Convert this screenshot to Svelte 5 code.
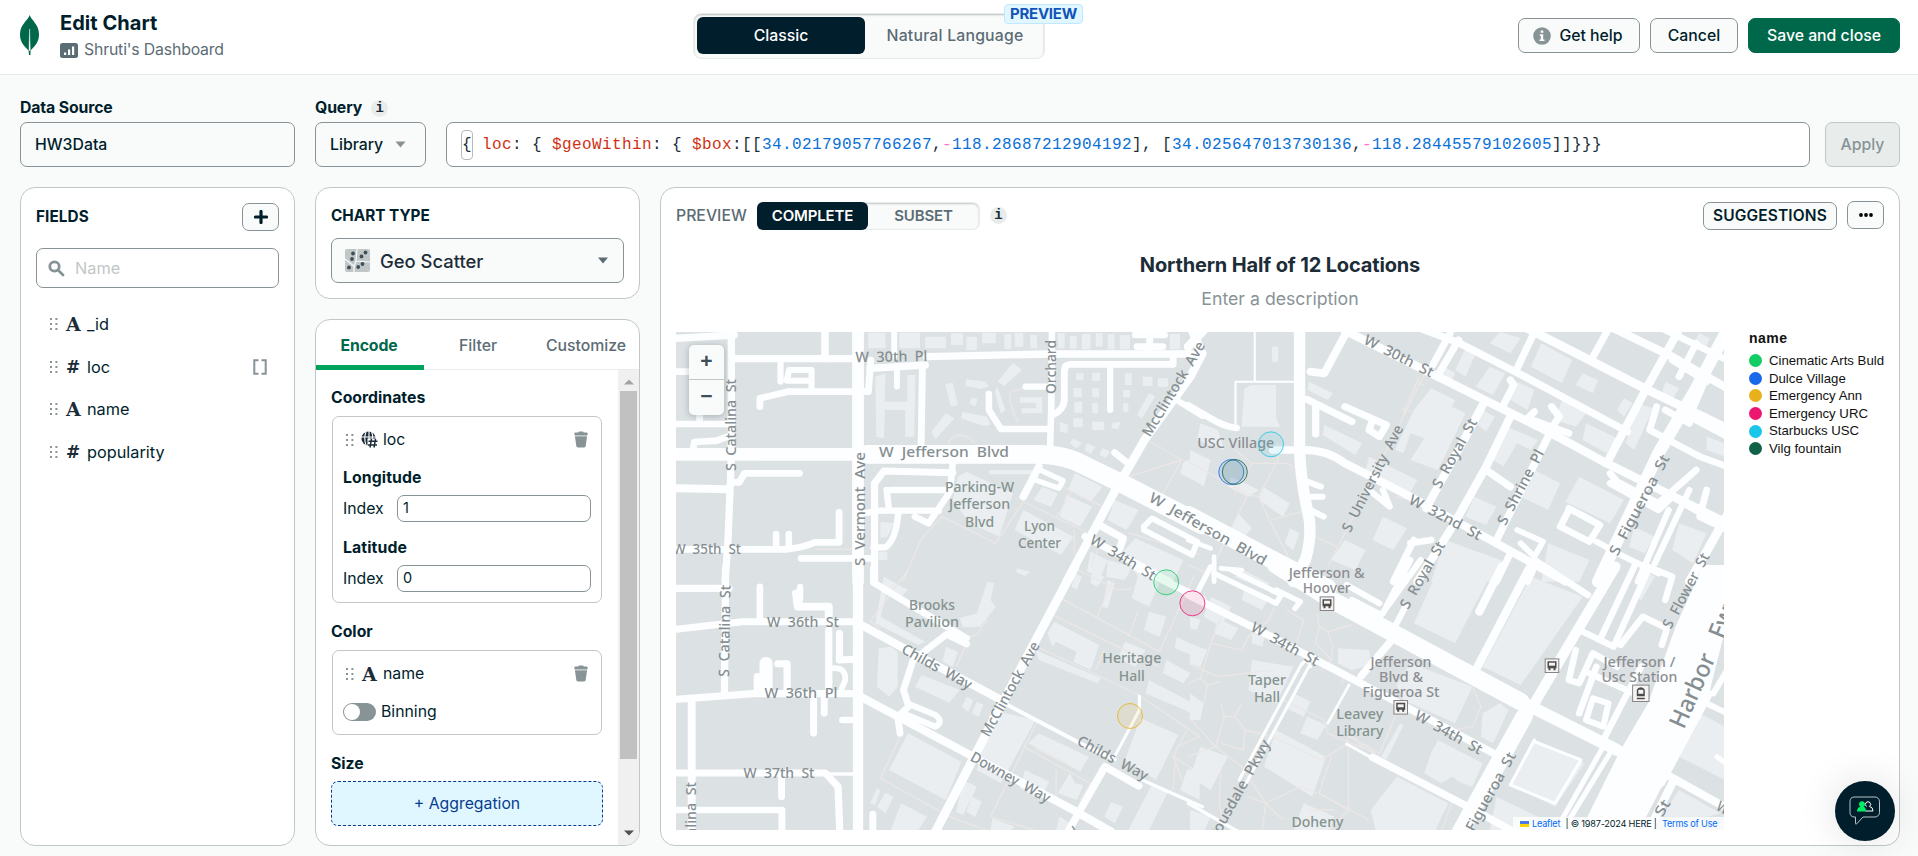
<script>
  const fields = [
    { name: '_id', type: 'A' },
    { name: 'loc', type: '#', array: true },
    { name: 'name', type: 'A' },
    { name: 'popularity', type: '#' }
  ];

  const legend = [
    ['Cinematic Arts Buld', '#13cc63'],
    ['Dulce Village', '#1868ea'],
    ['Emergency Ann', '#e8b01a'],
    ['Emergency URC', '#ec1670'],
    ['Starbucks USC', '#19c5e8'],
    ['Vilg fountain', '#116149']
  ];

  const markers = [
    [490.2, 250.3, '#13cc63'],
    [516.4, 271.3, '#ec1670'],
    [454, 384, '#e8b01a'],
    [555.3, 140, '#1868ea'],
    [558.8, 140, '#116149'],
    [595, 112.3, '#19c5e8']
  ];

  // text, centre x, centre y, rotation, length
  const streets = [
    ['W  30th  Pl', 215.4, 24.7, -1, 72],
    ['S  Catalina  St', 55, 93, -90, 92],
    ['S  Vermont  Ave', 183.7, 177, -90, 114],
    ['W  Jefferson  Blvd', 268, 119.7, 0, 130],
    ['Orchard', 374.8, 35, -90, 54],
    ['McClintock  Ave', 497.5, 57, -59, 108],
    ['W  Jefferson  Blvd', 532, 197, 29.5, 132],
    ['W  35th  St', 31, 217, 0, 68],
    ['W  34th  St', 447, 225.5, 31, 74],
    ['S  Catalina  St', 48.7, 298.8, -89, 92],
    ['W  36th  St', 127, 290.3, 0, 72],
    ['W  36th  Pl', 125, 361.3, 0, 73],
    ['W  37th  St', 103, 440.7, 0, 71],
    ['S  Catalina  St', 15, 496, -90, 92],
    ['Childs  Way', 261, 334.7, 29, 78],
    ['McClintock  Ave', 334, 357, -61, 106],
    ['Downey  Way', 334.5, 445.3, 29, 89],
    ['Childs  Way', 436.8, 426, 28, 78],
    ['Way', 390, 506, -50, 28],
    ['W  30th  St', 723, 24, 27, 76],
    ['S  University  Ave', 696.5, 146.3, -63, 118],
    ['S  Royal  St', 778.5, 121.3, -61, 77],
    ['W  32nd  St', 769.5, 185.3, 28, 80],
    ['S  Shrine  Pl', 844.6, 155.3, -62, 83],
    ['S  Figueroa  St', 963.4, 173, -62, 112],
    ['S  Royal  St', 746.4, 243, -60, 75],
    ['S  Flower  St', 1009.9, 258.7, -62, 83],
    ['W  34th  St', 609, 312, 29, 75],
    ['W  34th  St', 772.6, 400.3, 29, 75],
    ['Figueroa  St', 814.6, 459.7, -61, 88],
    ['Trousdale  Pkwy', 562, 460, -61, 117],
    ['St', 986.5, 476, -60, 17],
    ['W', 1047, 476, 30, 12]
  ];

  // text, centre x, centre y, length, transit stop
  const places = [
    ['Parking-W', 303.6, 154.7, 69],
    ['Jefferson', 303.6, 172.3, 61],
    ['Blvd', 303.6, 190, 29],
    ['Lyon', 363.5, 194, 31],
    ['Center', 363.5, 211.3, 43],
    ['Brooks', 256, 272.7, 46],
    ['Pavilion', 256, 290.3, 54],
    ['Heritage', 455.8, 326.3, 59],
    ['Hall', 455.8, 344, 26],
    ['Taper', 591, 347.7, 38],
    ['Hall', 591, 365, 26],
    ['Leavey', 683.8, 381.7, 47],
    ['Library', 683.8, 399, 47],
    ['Doheny', 641.4, 490, 52],
    ['USC Village', 559.8, 111.3, 77, true],
    ['Jefferson &', 650.7, 241.3, 76, true],
    ['Hoover', 650.7, 256.3, 48, true],
    ['Jefferson', 725, 330, 61, true],
    ['Blvd &', 725, 345, 44, true],
    ['Figueroa St', 725, 360.3, 77, true],
    ['Jefferson /', 963.4, 330, 72, true],
    ['Usc Station', 963.4, 345, 76, true]
  ];

  const stops = [[651, 271.7], [724.7, 375.3], [876, 333.7]];

  // Each sheet has its own grid of about three units per pixel; roads are [path, width].
  const sheets = [
    {
      x: -16, y: -22,
      roads: [
        ['M46 85L215 75', 22], ['M207 66V440L205 500L197 700L189 815', 21],
        ['M215 146H575M610 175L770 165M775 140L1130 132H1567', 22],
        ['M479 66V146', 22], ['M46 185H85M46 342H207M115 342V310', 20],
        ['M350 150V215M375 180H440V240M375 180L368 212H440', 18],
        ['M290 290V265L370 245H605L612 150', 20],
        ['M97 412L100 396L165 392L195 380', 20],
        ['M46 433H590', 38], ['M600 433H1100Q1180 435 1230 465L1340 520L1575 645', 56],
        ['M46 535L200 538', 24], ['M405 490H245L230 517H205', 20],
        ['M46 718H370Q420 712 450 697H520V607', 20], ['M337 672V710M374 672V710', 19],
        ['M410 745H620', 20],
        ['M623 815V520L650 483L850 488', 21],
        ['M850 460L842 545L780 640L740 620M670 540H840M658 540L665 600M590 610L640 602H810M692 610Q685 690 655 712H620', 19],
        ['M680 66V140M688 170V230', 17], ['M762 165L758 420', 20],
        ['M1138 66L1136 300L1132 430', 19],
        ['M1062 230H1130M955 252V300L990 357H1130', 19],
        ['M1140 315Q1172 300 1174 270V185Q1174 163 1192 163H1490V135', 20], ['M1307 170V300', 18],
        ['M1575 130L1540 200L1410 385L1320 545L1180 815', 25],
        ['M1500 270L1575 318', 18], ['M1545 60L1565 110', 26],
        ['M1380 75H1465M1385 110H1460M1422 75V130', 20],
        ['M1320 428L1365 465', 20], ['M1100 470L1055 560', 22],
        ['M1100 478L1170 512L1158 535L1090 510', 16],
        ['M1275 645L1345 685L1335 715M1235 680L1480 815', 22],
        ['M1405 650L1428 625L1560 695L1545 735L1405 660', 17],
        ['M575 60V815', 34]
      ],
      buildings: 'M605 68H655V115H605ZM695 68H755V115H695ZM770 80H830V115H770ZM845 70H880V105H845ZM890 80H920V120H890ZM935 68H975V100H935ZM1000 72H1020V118H1000ZM1030 68H1055V110H1030ZM1075 75H1095V115H1075ZM1155 70H1175V115H1155ZM1190 78H1210V116H1190ZM1225 72H1250V118H1225ZM1265 70H1285V110H1265ZM1300 72H1320V118H1300ZM1335 75H1365V118H1335ZM1480 72H1510V118H1480ZM625 200L655 190L652 275H718V195H742L738 380H712V300H653L650 385L628 380ZM980 215L1025 158L1050 180L1000 228ZM888 208L945 215L955 230L930 237L888 228ZM828 222L850 218L865 285L845 290ZM788 365L830 310L855 325L800 388ZM878 305L950 320L960 345L940 348L875 325ZM980 230L1003 300L990 312L972 245ZM905 262L922 268L915 290L898 280ZM1045 262H1110V310H1050V295H1092V278H1045ZM1208 190H1230V210H1208ZM1255 188H1278V212H1255ZM1200 235H1225V262H1200ZM1255 235H1275V262H1255ZM1203 275H1226V308H1203ZM1200 325H1228V352H1200ZM1255 280H1272V310H1255ZM1160 335L1185 345L1182 370L1162 365ZM1255 335H1290V360H1255ZM1315 338L1338 335L1330 358L1310 355ZM1350 190H1370V225H1350ZM1345 240H1365V262H1345ZM1345 280H1360V305H1345ZM1402 200H1430V228H1402ZM1445 205H1475V230H1445ZM1420 250L1438 258L1400 325L1385 315ZM1200 385L1225 400L1210 415L1190 400ZM1240 400L1265 410L1250 432L1232 420ZM1285 415L1308 425L1295 443L1275 435ZM865 500L890 485L1025 550L985 680L900 640L850 570ZM955 480H1080V493H955ZM1110 530L1155 550L1135 590L1085 570ZM1205 490L1285 530L1250 575L1185 540ZM1180 555L1255 590L1220 650L1160 620ZM1055 600L1200 680L1165 735L1030 660ZM1320 570L1390 600L1355 660L1300 630ZM1380 685L1520 750L1490 815H1400L1340 730ZM1250 725L1300 750L1280 800L1240 785ZM1300 750L1370 770L1350 810L1295 800ZM640 635L680 640L660 680L640 685ZM635 725H660V750H635ZM1035 775L1075 785L1060 797L1035 788ZM1520 455L1567 440V520L1510 490Z',
      paths: 'M1040 335Q1010 280 1018 245L1060 233M835 400Q870 350 915 400M820 620L975 700L1055 575L1285 690M1195 545L1150 625M1170 530L1285 590M820 620L760 685L705 815M1420 393L1515 450L1360 500M1515 450L1458 555M1203 660V735M1250 770L1280 700M1360 668L1567 735M560 718H450'
    },
    {
      x: -16, y: 238,
      roads: [
        ['M46 55H200', 22], ['M190 -5V50L187 375', 21], ['M46 178L240 155H575', 21],
        ['M290 50V150', 19], ['M395 70L400 110H490V150', 23], ['M407 50V90', 18], ['M490 180V370M521 190V270L565 268', 21],
        ['M500 295Q540 290 538 330L528 355', 17],
        ['M46 388L270 371H575', 22], ['M92 395V785', 23],
        ['M308 280V350', 38], ['M283 320V360', 22], ['M342 281H369V360', 21],
        ['M446 380V490M477 380V430M530 450H575', 20],
        ['M46 609H480L517 650L522 785', 21], ['M480 612H575', 10], ['M353 620V680M46 720H354V785M618 732V785', 20],
        ['M590 168L700 230L900 340L1000 395', 24], ['M1000 400L1220 520L1320 568', 12],
        ['M585 382L700 445L900 555L1200 720L1310 785', 24],
        ['M620 -5V38L760 125L890 205', 20], ['M890 222L832 193L735 270L707 360L722 410L690 440L697 490', 20],
        ['M725 403L800 435Q825 455 800 470L718 435', 18],
        ['M1205 -10L1130 135L930 525L800 785', 26],
        ['M1185 785L1220 720L1292 590L1390 648', 22], ['M1400 630L1575 710', 10], ['M1320 560L1392 420V378', 9],
        ['M1380 -10L1575 88', 22],
        ['M575 -5V785', 30]
      ],
      buildings: 'M650 20L720 60L700 80L660 60L640 140L770 215L750 225L625 160ZM950 35L970 40L960 90L975 110L930 170L880 172L870 145L920 130ZM635 235L670 230L690 245V350L665 380L630 350ZM830 230L865 245L850 290L820 275ZM760 315L870 360L840 398L740 350ZM720 490L875 575L830 690L665 600ZM890 380L910 390L895 425L877 410ZM920 395L940 405L925 440L905 430ZM960 420L1090 450L990 640L920 600ZM1145 155L1275 225L1250 300L1200 275L1210 245L1150 215L1140 230L1125 190ZM1100 490L1245 560L1220 605L1070 520ZM880 630L920 650L880 735L860 725ZM905 680L935 695L915 740L890 725ZM700 700L775 740L750 780H670ZM610 700L630 655L640 660L625 705ZM630 710L655 668L678 680L655 730ZM1060 600L1130 635L1105 690L1045 655ZM1190 610L1205 640L1230 645L1210 690L1155 670ZM1395 445L1505 495L1440 630L1350 570ZM1390 10L1450 40L1420 110L1370 85ZM1420 125L1470 140L1450 200L1405 180ZM1500 200L1567 235V265L1495 235ZM1470 270L1540 310L1520 340L1460 310ZM1350 215L1410 240L1380 290L1330 265ZM1420 330L1567 410V440L1410 370ZM1430 640L1475 665L1420 780H1360ZM1530 600L1567 590V690L1510 660ZM965 745L1030 770L1020 780H960ZM1255 0L1290 20L1270 50L1250 40ZM1300 30L1320 40L1300 115L1285 110ZM1205 10L1225 20L1210 60L1195 50ZM1090 240L1280 325L1270 340L1100 270ZM1160 740L1200 765L1190 780H1150ZM1310 695L1345 710L1320 760L1290 740Z',
      paths: 'M720 0L610 155L640 175M950 150L920 195L900 200L860 290M700 495L640 625L840 740L960 785M1165 85L1450 245M1130 130L1450 290M1085 225L1390 375L1567 500M1450 245L1550 20M1315 30L1270 140M1390 120L1360 200M1265 300L1290 240M1095 455L960 740L1100 785M1055 530L1250 640L1220 690M1090 535L1180 580M1150 600L1150 680M1530 480L1490 560L1567 610M1490 560L1520 640M1500 530L1567 500M1215 0L1330 60L1370 55M1495 580L1490 660'
    },
    {
      x: 514, y: -22,
      roads: [
        ['M188 66V215M132 355V215H305', 6], ['M-5 286L60 325Q100 350 135 354', 20],
        ['M350 185L390 190L450 75', 23], ['M-5 110L40 60', 26],
        ['M450 62L700 190L1040 365L1210 460L1560 640', 25],
        ['M655 50L780 98L950 188L1270 365', 22], ['M970 50L1320 235L1560 355', 26],
        ['M1220 50L1400 140L1560 235', 24], ['M1360 50L1560 150', 20],
        ['M780 90L720 195M755 70L705 165M1000 66L950 175M1210 66L1165 150', 21],
        ['M1425 50L1320 245L1210 460', 24], ['M1560 60L1470 235L1360 430L1185 815', 36],
        ['M855 275L790 400L685 595M930 320L860 470L765 645L660 815', 24], ['M860 480L930 530M1040 380L890 690', 22],
        ['M330 420Q400 420 450 460L640 560L890 700L1090 815', 24], ['M240 420H330', 22],
        ['M340 268L470 335M450 290L570 345L550 380L520 360L530 330M365 290V372', 21],
        ['M930 210L940 225L905 295M1050 290L1072 320L1040 370M1000 305L980 325L1100 370', 21],
        ['M340 515L380 530M345 560H385M350 600L388 620M520 540L580 590L560 540', 18],
        ['M1355 290L1335 360L1480 440L1560 470M1380 300L1450 340M1500 200L1450 320L1560 380M1400 150L1500 215M1470 100L1420 200', 20],
        ['M1220 490L1240 515L1360 580L1470 480M1220 520L1360 600L1400 560L1500 620M1500 540L1480 620L1560 660', 20],
        ['M1100 600L1075 650L1160 695L1190 645L1100 595', 20], ['M1180 695L1260 740L1360 790M1390 600L1300 815M1450 540L1350 760', 18],
        ['M1560 615L1450 815', 26], ['M930 730L890 815M1000 770L980 815M650 690L590 815M640 700L700 690', 20],
        ['M950 660L1025 695L1000 740L960 700', 17], ['M70 815V740M90 775L150 780', 14], ['M-5 690L60 715', 14],
        ['M-5 615L250 755L400 835', 54],
        ['M318 60V400Q318 500 345 620Q355 680 335 750L300 815', 33]
      ],
      buildings: 'M158 235L180 225H250V325L262 350H150ZM238 110H256V155H238ZM345 215L415 250L400 270L342 240ZM390 345L500 400L480 435L385 375ZM700 235L770 270L760 290L800 310L720 480L640 450L680 385L640 370L620 430L595 420L650 300ZM520 440L660 510L640 545L510 480ZM800 115L830 130L800 200L770 180ZM740 170L770 190L755 220L725 200ZM870 170L915 190L880 255L830 230ZM900 66L960 85L930 130L870 100ZM1020 100L1110 150L1080 220L990 170ZM1140 190L1185 210L1170 250L1120 225ZM950 215L1000 240L980 300L930 270ZM1080 270L1150 310L1120 350L1060 330ZM1150 340L1240 385L1210 430L1140 390ZM1240 300L1260 265L1285 280L1260 320ZM1300 280L1345 295L1290 420L1265 400ZM1380 215L1420 235L1400 270L1370 250ZM1480 70L1510 85L1495 120L1460 100ZM920 350L1010 390L990 420L950 400L910 470L880 450ZM1000 480L1075 520L1040 600L960 560ZM1130 500L1260 570L1220 640L1090 575ZM825 560L890 590L860 645L800 620ZM740 690L915 755L890 815H700ZM1040 700L1160 750L1130 815H1020ZM850 300L885 320L860 365L830 340ZM560 620L630 655L590 720L530 690ZM450 690L510 720L480 780L410 750ZM290 655L318 670L300 720L275 700ZM210 530L290 580L270 620L200 570ZM120 500L200 540L170 560L110 530ZM0 420L60 450L40 530L0 500ZM30 340L80 360L100 420L20 390ZM140 610L180 655L150 690L115 660ZM1420 640L1500 670L1460 760L1400 720ZM1500 380L1553 400V440L1500 420ZM1290 650L1350 680L1320 730L1275 710Z',
      paths: 'M680 195L440 690L400 770M665 200L620 310M655 215L680 225M615 295L640 305M-5 455L170 555L200 560L230 630L300 770M235 630L325 605M165 560L80 740M180 460H280Q310 470 315 490M130 420L180 460L130 555M250 460L200 560M255 400V460M365 680L430 712M-5 765L40 785M600 560L640 570'
    },
    {
      x: 514, y: 238,
      roads: [
        ['M1490 -15H1556V170L1500 400L1370 650L1300 790H1130L1250 540L1330 400L1410 170Z', 0],
        ['M-5 75L180 170L370 272L700 450L890 555', 22],
        ['M25 60L60 -10M70 10L250 100L265 75L120 0M250 60L320 95L305 115', 16],
        ['M590 205L497 318', 22], ['M455 45L550 100M470 90L555 135L670 -30M560 130L640 -30M600 160L625 110', 18],
        ['M840 125L905 -10M835 290L990 -15', 24], ['M1000 -30L1155 75', 20],
        ['M980 435L1120 190L1235 -10', 30], ['M970 440L785 785', 50],
        ['M1130 180L1230 230L1330 0M1190 210L1290 -10M1250 225L1315 140L1385 175L1370 225M1120 240L1100 330L1130 340L1170 250L1240 290M1180 290L1130 430M1200 510L1310 290M1380 90L1400 20L1330 -10M1160 310L1290 370', 19],
        ['M1170 385L1215 400L1200 470L1150 450Z', 18],
        ['M345 290L160 645M325 280L143 630', 9], ['M325 283Q340 260 350 290', 9], ['M462 345L400 460', 8],
        ['M455 522L530 565', 9], ['M530 562L810 712L940 785', 22],
        ['M1225 540L1080 785M1200 530L1060 785', 15],
        ['M1510 370L1370 640M1500 400L1560 430M1520 370L1560 300', 18], ['M1385 615L1560 715M1400 640L1330 785', 24], ['M1530 560L1556 580', 15],
        ['M-5 700L140 785', 10],
        ['M1000 510L930 645L1060 700L1135 570L1000 515', 9],
        ['M250 -15L420 95L960 395', 52], ['M960 395L1240 540', 36]
      ],
      buildings: 'M60 80L120 110L90 170L40 140ZM80 145L140 175L120 210L70 190ZM180 270L300 290L250 400L170 360ZM430 235L520 240L525 285L470 300L430 280ZM300 370L350 395L330 440L280 415ZM340 440L395 465L370 510L320 490ZM250 480L395 560L355 680L215 590ZM600 345L640 280L820 350L770 460L620 390ZM850 430L900 400L925 420L880 520L845 500ZM600 620L750 700L710 785H540L525 720ZM700 550L720 510L850 580L820 650L790 640L760 620L730 640L680 610ZM610 460L620 465L570 570L555 560ZM890 680L1010 740L990 785H870ZM1005 510L1145 580L1060 710L930 640ZM720 0H880L770 220L650 160ZM990 20L1140 80L960 345L850 290ZM0 220L50 240L30 290L0 280ZM0 370L40 400L30 450L0 450ZM30 530L110 560L60 660L0 620ZM0 720L60 740L40 785H0ZM160 50L230 80L210 120L150 90ZM1480 430L1553 470V630L1420 560ZM1420 660L1540 730L1500 740H1370ZM330 700L420 740L400 785H300ZM155 0L230 40L220 60L130 20ZM0 140L30 150L20 180L0 175ZM180 170L220 190L210 230L180 220ZM1320 0L1350 20L1310 90L1290 80Z',
      paths: 'M370 130L375 170L400 185L470 165M375 170L365 220L410 270L380 300M400 185L415 230L410 270M245 110L230 150L170 200L150 240L60 220L90 140M60 220L30 325L-5 340M-5 280L80 320L240 300M30 325L50 345L40 400M50 345L90 335M270 390L390 450L400 490L540 550M-5 440L75 530L-5 560M90 400L100 440H130L150 400M100 440L75 530M130 440L160 480L155 540L90 520M160 480L240 500L380 570L460 520V720L375 670L520 750M220 700L150 590L75 530M220 700L170 680M220 700L320 650L370 670M220 700L210 780M220 700L270 750M410 560L375 670M455 520L460 500Q490 500 495 530Q510 510 530 550M600 430L550 550L460 500M820 350L845 410L820 470L770 480M400 720H420M400 720L340 720M460 720L400 785M440 345L450 310M90 600L85 700L95 760M280 120L330 150L300 250M1370 430L1280 520M760 700L730 785'
    }
  ];
</script>

{#snippet grip()}
  <svg class="grip" width="10" height="14" viewBox="0 0 10 14">
    {#each [2, 7, 12] as y}
      <rect x="1" y={y - 1} width="2" height="2" /><rect x="6.4" y={y - 1} width="2" height="2" />
    {/each}
  </svg>
{/snippet}

{#snippet trash()}
  <svg class="trash" width="14" height="17" viewBox="0 0 14 17">
    <path d="M4.2 1.6L5 .6h4l.8 1H12.6a1 1 0 0 1 1 1V4H.4V2.600a1 1 0 0 1 1-1z" fill="#889397" />
    <path d="M.9 5.200H13.100L11.700 15a1.600 1.600 0 0 1-1.600 1.400H3.900A1.600 1.600 0 0 1 2.300 15z" fill="#889397" />
    <path d="M.8 4h12.400v1.300H.8z" fill="#c1c7c6" />
  </svg>
{/snippet}

<div class="app">
  <header>
    <svg class="leaf" width="20" height="41" viewBox="0 0 20 41">
      <path d="M9.700 0C11.500 5.500 19 9 19 19.500C19 28.500 13.500 32 10.600 35.500L10.400 40H9L8.600 35.500C5.500 32 0 28.500 0 19.500C0 9 8 5.500 9.700 0Z" fill="#00684a" />
      <path d="M9.600 14L10.300 35.500H9Z" fill="#fff" stroke="#fff" stroke-width=".4" />
    </svg>
    <div class="heading">
      <h1>Edit Chart</h1>
      <div class="crumb">
        <svg width="18" height="15" viewBox="0 0 18 15"><rect width="18" height="15" rx="2.500" fill="#5c6c75" /><path d="M4 9.500h2.200v2.500H4zM8 6.500h2.200V12H8zM12 3.500h2.200V12H12z" fill="#fff" /></svg>
        <span>Shruti's Dashboard</span>
      </div>
    </div>
    <div class="mode">
      <div class="on">Classic</div>
      <div class="off">Natural Language</div>
      <span class="badge">PREVIEW</span>
    </div>
    <div class="actions">
      <button class="help">
        <svg width="18" height="18" viewBox="0 0 18 18"><circle cx="9" cy="9" r="8.800" fill="#889397" /><path d="M7.700 3.500h2.600v2.300H7.700zM6.700 7.300h3.500v5.300h1.300V14H6.500v-1.400h1.300V8.700H6.700z" fill="#fff" /></svg>
        Get help
      </button>
      <button class="cancel">Cancel</button>
      <button class="save">Save and close</button>
    </div>
  </header>

  <section class="querybar">
    <div class="source">
      <b class="label">Data Source</b>
      <div class="box">HW3Data</div>
    </div>
    <div class="library">
      <b class="label">Query <i class="info">i</i></b>
      <div class="box">Library <svg width="11" height="7" viewBox="0 0 11 7"><path d="M.5.5h10L5.500 6.500z" fill="#889397" /></svg></div>
    </div>
    <div class="code"><span class="cur">&lbrace;</span> <span class="key">loc</span>: &lbrace; <span class="key">$geoWithin</span>: &lbrace; <span class="key">$box</span>:[[<span class="num">34.02179057766267</span>,<span class="neg">-</span><span class="num">118.28687212904192</span>], [<span class="num">34.025647013730136</span>,<span class="neg">-</span><span class="num">118.28445579102605</span>]]&rbrace;&rbrace;&rbrace;</div>
    <button class="apply">Apply</button>
  </section>

  <main>
    <aside class="panel fields">
      <div class="top">
        <b>FIELDS</b>
        <button aria-label="Add field"><svg width="14" height="14" viewBox="0 0 14 14"><path d="M7 1.500v11M1.500 7h11" stroke="#001e2b" stroke-width="3.200" stroke-linecap="round" /></svg></button>
      </div>
      <div class="search">
        <svg width="17" height="17" viewBox="0 0 17 17" fill="none" stroke="#889397" stroke-width="2.800"><circle cx="6.500" cy="6.500" r="4.700" /><path d="M10 10l5 5" stroke-linecap="round" /></svg>
        Name
      </div>
      <ul>
        {#each fields as f}
          <li>
            {@render grip()}
            <span class="type" class:hash={f.type === '#'}>{f.type}</span>
            <span>{f.name}</span>
            {#if f.array}
              <svg class="brackets" width="14" height="16" viewBox="0 0 14 16" fill="none" stroke="#889397" stroke-width="2"><path d="M5.500 1.200H1.300v13.600h4.200M8.500 1.200h4.200v13.600H8.500" /></svg>
            {/if}
          </li>
        {/each}
      </ul>
    </aside>

    <div class="middle">
      <div class="panel chart-type">
        <b>CHART TYPE</b>
        <div class="select">
          <svg width="25" height="23" viewBox="0 0 25 23">
            <rect width="25" height="23" rx="2" fill="#c1c7c6" />
            <path d="M12 0L11 12L25 13M11 12L9 17V23M0 10L10 18" stroke="#f9fbfa" stroke-width="1.200" fill="none" />
            <g fill="#3d4f58"><circle cx="8" cy="4.500" r="1.900" /><circle cx="7" cy="10" r="1.900" /><circle cx="20.500" cy="3.500" r="1.900" /><circle cx="16.500" cy="7.500" r="1.900" /><circle cx="4" cy="18.500" r="1.900" /><circle cx="13.200" cy="18" r="1.900" /><circle cx="17.500" cy="15" r="1.900" /></g>
          </svg>
          <span>Geo Scatter</span>
          <svg width="10" height="7" viewBox="0 0 10 7"><path d="M0 .5h10L5 6.500z" fill="#5c6c75" /></svg>
        </div>
      </div>

      <div class="panel encode">
        <nav><b>Encode</b><span>Filter</span><span>Customize</span></nav>
        <div class="scroller">
          <div class="channels">
            <b>Coordinates</b>
            <div class="card geo">
              <div class="chan">
                {@render grip()}
                <svg class="globe" width="17" height="17" viewBox="0 0 17 17">
                  <circle cx="7.500" cy="7.500" r="7" fill="#1c2d38" />
                  <path d="M5 1Q2.500 7 5 14M8 0V15M10.500 1Q12.500 5 11 8M0 6H15" stroke="#fff" stroke-width="1.100" fill="none" />
                  <path d="M6.500 7.500H17V17H6.500z" fill="#fff" />
                  <path d="M10.500 7.800L9 16.500M14.500 7.800L13 16.500M7.500 10.300h9M7 14h9" stroke="#1c2d38" stroke-width="1.500" />
                </svg>
                <span>loc</span>{@render trash()}
              </div>
              <b class="axis">Longitude</b>
              <div class="index"><span>Index</span><div>1</div></div>
              <b class="axis lat">Latitude</b>
              <div class="index"><span>Index</span><div>0</div></div>
            </div>
            <b>Color</b>
            <div class="card color">
              <div class="chan">{@render grip()}<span class="type">A</span><span>name</span>{@render trash()}</div>
              <div class="binning"><div class="switch"></div>Binning</div>
            </div>
            <b>Size</b>
            <div class="agg">+ Aggregation</div>
          </div>
          <div class="track">
            <svg width="10" height="6" viewBox="0 0 10 6"><path d="M0 5.500L5 .5l5 5z" fill="#a3a3a3" /></svg>
            <div class="thumb"></div>
            <svg class="down" width="10" height="6" viewBox="0 0 10 6"><path d="M0 .5L5 5.500l5-5z" fill="#505050" /></svg>
          </div>
        </div>
      </div>
    </div>

    <section class="panel preview">
      <div class="bar">
        <span class="cap">PREVIEW</span>
        <div class="sample"><div class="on">COMPLETE</div><div class="off">SUBSET</div></div>
        <i class="info">i</i>
        <button class="suggest">SUGGESTIONS</button>
        <button class="more" aria-label="More"><svg width="14" height="4" viewBox="0 0 14 4"><circle cx="2" cy="2" r="1.900" /><circle cx="7" cy="2" r="1.900" /><circle cx="12" cy="2" r="1.900" /></svg></button>
      </div>
      <h2>Northern Half of 12 Locations</h2>
      <p>Enter a description</p>
      <div class="chart">
        <div class="map">
          <svg width="1049" height="498" viewBox="0 0 1049 498">
            <rect width="1049" height="498" fill="#dce1e3" />
            {#each sheets as s}
              <g transform="translate({s.x} {s.y}) scale(.3444 .3333)">
                <path d={s.buildings} fill="#eaeef1" />
                <path d={s.paths} fill="none" stroke="#ece7e6" stroke-width="4" />
              </g>
            {/each}
            {#each sheets as s}
              <g transform="translate({s.x} {s.y}) scale(.3444 .3333)" stroke="#fdfeff" stroke-linecap="round" stroke-linejoin="round">
                {#each s.roads as [d, w]}
                  <path {d} fill={w ? 'none' : '#fdfeff'} stroke-width={w} />
                {/each}
              </g>
            {/each}
            <g class="labels">
              {#each streets as [text, x, y, a, len]}
                <text transform="translate({x} {y}) rotate({a})" y="5" textLength={len} lengthAdjust="spacingAndGlyphs">{text}</text>
              {/each}
              {#each places as [text, x, y, len, stop]}
                <text class={stop ? 'stop' : 'poi'} {x} y={y + 5} textLength={len} lengthAdjust="spacingAndGlyphs">{text}</text>
              {/each}
              <text class="fwy" transform="translate(1017.500 359) rotate(-66)" y="7" textLength="79" lengthAdjust="spacingAndGlyphs">Harbor</text>
              <text class="fwy" transform="translate(1049 285) rotate(-68)" y="7" textLength="44" lengthAdjust="spacingAndGlyphs">Fwy</text>
            </g>
            {#each stops as [x, y]}
              <g transform="translate({x} {y})">
                <rect x="-6.800" y="-6.800" width="13.600" height="13.600" fill="#f4f4f4" stroke="#898383" />
                <path d="M-4.500-4.500h9v7h-9zM-3.500 2.500h2v2h-2zM1.500 2.500h2v2h-2z" fill="#4e4b4b" />
                <path d="M-3-3h6v3h-6z" fill="#f4f4f4" />
              </g>
            {/each}
            <g transform="translate(964.800 361.300)">
              <rect x="-8.200" y="-8.200" width="16.400" height="16.400" fill="#f4f4f4" stroke="#898383" />
              <path d="M-4 3V-3.500Q-3-6 0-6T4-3.500V3zM-4 4.500h8V6h-8z" fill="#4e4b4b" />
              <path d="M-2.500-3.500h5v4h-5z" fill="#f4f4f4" />
            </g>
            {#each markers as [x, y, c]}
              <circle cx={x} cy={y} r="12.500" fill={c} fill-opacity=".1" stroke={c} stroke-opacity=".8" />
            {/each}
          </svg>
          <div class="zoom"><div>+</div><div>−</div></div>
          <div class="credit">
            <svg width="9" height="6" viewBox="0 0 9 6"><path d="M0 0h9v3H0z" fill="#4c7be1" /><path d="M0 3h9v3H0z" fill="#ffd500" /></svg>
            <span class="link">Leaflet</span> | © 1987-2024 HERE | <span class="link">Terms of Use</span>
          </div>
        </div>
        <div class="legend">
          <b>name</b>
          {#each legend as [name, color]}
            <div class="item"><i style:background={color}></i>{name}</div>
          {/each}
        </div>
      </div>
    </section>
  </main>

  <div class="chat">
    <svg width="32" height="30" viewBox="0 0 32 30" fill="none" stroke="#b9c3c8">
      <path d="M5 1H26a4.500 4.500 0 0 1 4.500 4.500V16.500a4.500 4.500 0 0 1-4.500 4.500H14L7.500 28q-1 .6-1-.6V21H5a4.500 4.500 0 0 1-4-4.500V5.500A4.500 4.500 0 0 1 5 1z" />
      <path d="M16.500 15H24q0-4-3.500-4.500a2.600 2.600 0 1 0-3 0" stroke="#fff" />
      <path d="M8 15.500q0-4 3.500-4.700a3 3 0 1 1 3 0Q17 11.500 17 15.500z" fill="#00ed64" stroke="none" />
    </svg>
  </div>
</div>

<style>
  :global(body) { margin: 0; }
  * { box-sizing: border-box; }
  .app { width: 1918px; height: 856px; overflow: hidden; background: #f9fbfa; color: #001e2b; font: 15.800px/20px Inter, sans-serif; position: relative; }
  svg { display: block; flex: none; }
  button { font: inherit; font-weight: 500; color: inherit; background: #f9fbfa; border: 1px solid #889397; border-radius: 7px; padding: 0; display: flex; align-items: center; justify-content: center; }

  header { height: 75px; background: #fff; border-bottom: 1px solid #e8edeb; display: flex; align-items: flex-start; padding: 0 18px 0 20px; }
  .leaf { margin-top: 15px; }
  .heading { margin: 11px 0 0 20px; width: 633px; }
  h1 { font-size: 20px; line-height: 24px; font-weight: 700; margin: 0; letter-spacing: .05px; }
  .crumb { display: flex; align-items: center; gap: 6px; color: #5c6c75; margin-top: 5px; letter-spacing: -.16px; }
  .mode { margin-top: 13px; width: 352px; height: 46px; border: 1px solid #e8edeb; border-radius: 8px; background: #f9fbfa; box-shadow: inset 0 1px 2px #b5bdbf; padding: 3px; display: flex; position: relative; font-weight: 500; line-height: 37px; text-align: center; }
  .mode .on { width: 168px; height: 37px; border-radius: 6px; background: #001e2b; color: #fff; }
  .mode .off { flex: 1; color: #5c6c75; letter-spacing: .2px; padding-left: 4px; }
  .badge { position: absolute; left: 310px; top: -10px; width: 79px; height: 20px; border: 1px solid #c3e7fe; border-radius: 4px; background: #e1f7ff; color: #1254b7; font-weight: 700; font-size: 15px; line-height: 18px; letter-spacing: -.25px; }
  .actions { margin: 18px 0 0 auto; display: flex; gap: 10px; }
  .actions button { height: 35px; }
  .help { width: 122px; gap: 8px; padding-right: 2px; }
  .cancel { width: 88px; }
  .actions .save { width: 152px; background: #00684a; border-color: #00684a; color: #fff; }

  .querybar { display: flex; align-items: flex-end; padding: 22px 18px 0 20px; height: 92px; }
  .source { width: 275px; margin-right: 20px; }
  .library { width: 111px; margin-right: 20px; }
  .label { display: flex; align-items: center; height: 20px; font-size: 15.800px; font-weight: 700; margin-bottom: 4px; letter-spacing: -.12px; }
  .box { height: 45px; border: 1px solid #889397; border-radius: 7px; padding: 0 14px; display: flex; align-items: center; gap: 12px; font-weight: 500; }
  .info { width: 17px; height: 17px; border-radius: 50%; background: #e8edeb; color: #1c2d38; font: 700 14px/17px "Liberation Mono", monospace; text-align: center; margin-left: 9px; letter-spacing: 0; }
  .code { width: 1364px; height: 45px; border: 1px solid #889397; border-radius: 7px; background: #fff; font: 16px/45px "Liberation Mono", monospace; letter-spacing: .398px; padding-left: 15px; white-space: pre; color: #1c2d38; }
  .cur { outline: 1px solid #b5bcbc; border-radius: 3px; padding: 5px 0; }
  .key { color: #cf3112; }
  .num { color: #0a70d8; }
  .neg { color: #ff6fc4; }
  .apply { width: 75px; height: 45px; margin-left: auto; background: #e8edeb; border-color: #c1c7c6; color: #889397; }

  main { display: flex; gap: 20px; padding: 20px 18px 0 20px; }
  .panel { background: #fff; border: 1px solid #c1c7c6; border-radius: 15px; }
  .fields { width: 275px; height: 659px; padding: 15px; }
  .top { display: flex; justify-content: space-between; align-items: center; font-size: 15.300px; letter-spacing: .1px; }
  .top button { width: 37px; height: 28px; }
  .search { margin-top: 17px; height: 40px; border: 1px solid #889397; border-radius: 7px; display: flex; align-items: center; gap: 10px; padding-left: 11px; color: #c1c7c6; font-size: 16.300px; }
  ul { list-style: none; margin: 15px 0 0; padding: 0; font-size: 16.300px; }
  li { height: 42.600px; display: flex; align-items: center; padding: 0 12px 0 13px; }
  .grip { fill: #889397; }
  .type { width: 21px; margin-left: 7px; margin-right: 0; font: 700 19px/20px "DejaVu Serif", serif; letter-spacing: -1px; color: #1c2d38; }
  .hash { font-family: "DejaVu Sans", sans-serif; font-size: 17px; }
  .brackets { margin-left: auto; }

  .middle { width: 325px; display: flex; flex-direction: column; gap: 20px; }
  .chart-type { height: 112px; padding: 18px 15px; font-size: 15.300px; }
  .select { margin-top: 12px; height: 45px; border: 1px solid #889397; border-radius: 7px; background: #f9fbfa; display: flex; align-items: center; padding: 0 15px 0 13px; gap: 10px; font-size: 18.400px; font-weight: 500; color: #1c2d38; }
  .select span { flex: 1; }
  .encode { height: 527px; overflow: hidden; display: flex; flex-direction: column; }
  nav { height: 50px; flex: none; border-bottom: 1px solid #e8edeb; display: flex; text-align: center; line-height: 51px; color: #5c6c75; font-weight: 500; }
  nav > * { width: 108px; flex: none; }
  nav b { color: #00684a; height: 50px; border-bottom: 5px solid #00a35c; border-radius: 4px 4px 0 0; letter-spacing: -.1px; font-weight: 700; padding-right: 2px; }
  .scroller { flex: 1; display: flex; }
  .channels { flex: 1; padding: 18px 15px 0; }
  .channels > b { display: block; font-size: 15.800px; line-height: 20px; }
  .card { margin: 8px 1px 0; border: 1px solid #c1c7c6; border-radius: 7px; padding: 0 10px; }
  .geo { height: 187px; margin-bottom: 19px; }
  .color { height: 85px; margin-bottom: 19px; }
  .chan { display: flex; align-items: center; height: 45px; padding: 0 3px 0 2px; }
  .globe { margin: 0 5px 0 6px; }
  .trash { margin-left: auto; }
  .axis { display: block; margin-top: 6px; font-size: 15.800px; letter-spacing: .1px; }
  .axis.lat { margin-top: 16px; }
  .index { display: flex; align-items: center; margin-top: 7px; justify-content: space-between; }
  .index div { width: 194px; height: 27px; border: 1px solid #889397; border-radius: 7px; padding-left: 5px; font-size: 14.500px; line-height: 24px; }
  .binning { display: flex; align-items: center; gap: 5px; margin-top: 6px; }
  .switch { width: 33px; height: 18px; border-radius: 9px; background: #889397; padding: 1px; }
  .switch::before { content: ''; display: block; width: 16px; height: 16px; border-radius: 50%; background: #fff; }
  .agg { margin-top: 7px; height: 45px; border: 1px dashed #083c90; border-radius: 7px; background: #e1f7ff; color: #083c90; line-height: 44px; text-align: center; }
  .track { width: 21px; background: #f0f0f0; display: flex; flex-direction: column; align-items: center; padding: 9px 0; }
  .thumb { width: 17px; height: 368px; background: #c1c1c1; margin-top: 6px; }
  .down { margin-top: auto; }

  .preview { width: 1240px; height: 659px; padding: 12px 15px 0; }
  .bar { display: flex; align-items: center; height: 31px; font-size: 15px; }
  .cap { color: #5c6c75; width: 81px; font-weight: 500; font-size: 15.800px; letter-spacing: 0; }
  .sample { display: flex; width: 223px; height: 28px; border: 1px solid #e8edeb; border-left: 0; border-radius: 7px; background: #f9fbfa; box-shadow: inset 0 1px 2px #c1c7c6; line-height: 26px; text-align: center; font-weight: 600; letter-spacing: -.15px; }
  .sample .on { width: 111px; margin: -1px 0; background: #001e2b; color: #fff; border-radius: 6px; line-height: 28px; }
  .sample .off { flex: 1; color: #5c6c75; }
  .bar .info { margin-left: 10px; }
  .suggest { width: 134px; height: 28px; margin-left: auto; font-weight: 600; font-size: 15.500px; letter-spacing: .12px; }
  .more { width: 37px; height: 28px; margin: -2px 0 0 10px; }
  h2 { margin: 22px 0 0; height: 24px; text-align: center; font-size: 20px; line-height: 24px; font-weight: 700; letter-spacing: -.15px; color: #1c2d38; }
  p { margin: 11px 0 0; height: 22px; text-align: center; font-size: 17.700px; line-height: 22px; color: #889397; }
  .chart { display: flex; margin-top: 22px; }
  .map { width: 1049px; height: 498px; position: relative; overflow: hidden; }
  .labels { font: 500 14.500px "Noto Sans", sans-serif; fill: #858e91; text-anchor: middle; white-space: pre; }
  .labels text { white-space: pre; }
  .poi { fill: #85938f; }
  .stop { fill: #8c8e92; font-size: 13.800px; }
  .labels .fwy { font-size: 24px; }
  .zoom { position: absolute; left: 13px; top: 13px; width: 35px; height: 70px; border-radius: 5px; background: #f9fbfa; box-shadow: 0 1px 6px rgba(0, 30, 43, .25); font: 700 21px/32px "Liberation Sans", sans-serif; text-align: center; color: #3d4f58; }
  .zoom div { height: 35px; }
  .zoom div:first-child { border-bottom: 1px solid #c1c7c6; }
  .credit { position: absolute; right: 0; bottom: 0; width: 211px; height: 13px; padding-left: 7px; background: rgba(255, 255, 255, .8); font: 9.200px/12px Inter, sans-serif; display: flex; align-items: center; gap: 3px; white-space: pre; letter-spacing: -.23px; }
  .link { color: #016bf8; }
  .legend { font: 13.200px/17.600px "Liberation Sans", sans-serif; padding: 0 0 0 25px; width: 160px; white-space: nowrap; color: #111; }
  .legend b { display: block; font-size: 14px; line-height: 20px; height: 19.500px; margin-top: -4px; letter-spacing: .5px; }
  .item { display: flex; align-items: center; gap: 7px; height: 17.600px; position: relative; top: 4.500px; }
  .item i { width: 13px; height: 13px; border-radius: 50%; }
  .chat { position: absolute; left: 1835px; top: 781px; width: 60px; height: 60px; border-radius: 50%; background: #001e2b; box-shadow: 0 0 40px rgba(0, 0, 0, .12); display: flex; align-items: center; justify-content: center; }
</style>
